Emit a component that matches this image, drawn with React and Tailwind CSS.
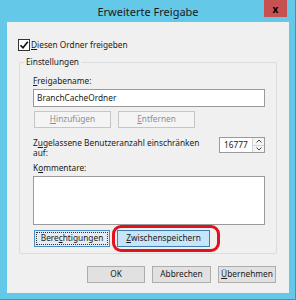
import { useState } from "react";

const FONT = { fontFamily: '"Noto Sans", "Liberation Sans", sans-serif' };

function Btn({ children, disabled, className = "" }) {
  return (
    <button
      disabled={disabled}
      className={`h-[17px] border text-[8.3px] leading-none ${
        disabled
          ? "bg-[#f4f4f4] border-[#c6c6c6] text-[#8f8f8f]"
          : "bg-[#e1e1e1] border-[#adadad] text-[#1a1a1a]"
      } ${className}`}
    >
      {children}
    </button>
  );
}

export default function App() {
  const [shared, setShared] = useState(true);

  return (
    <div
      className="w-[296px] h-[300px] bg-[#64c8e9] flex flex-col border-r border-b border-[#3f93b4] text-[8.3px] text-[#1a1a1a]"
      style={FONT}
    >
      {/* Title bar */}
      <div className="h-[22px] flex items-start shrink-0">
        <div className="flex-1 pt-[5px] pl-[32px] text-center text-[11px] leading-[14px] text-[#1a1a1a]">
          Erweiterte Freigabe
        </div>
        <div className="w-[23px] h-[17px] mr-[8px] bg-[#c75050] flex items-center justify-center text-[10px] font-bold text-black leading-none">
          x
        </div>
      </div>

      {/* Body */}
      <div className="flex-1 ml-[7px] mr-[6px] mb-[6px] bg-[#f0f0f0] flex flex-col">
        <label className="mt-[17px] ml-[11px] flex items-center gap-[1px] h-[12px]">
          <span
            onClick={() => setShared(!shared)}
            className="w-[12px] h-[12px] border border-[#333] bg-white flex items-center justify-center"
          >
            {shared && (
              <svg width="10" height="10" viewBox="0 0 10 10">
                <path d="M1.5 5.2 L4 7.8 L8.8 1.8" fill="none" stroke="#111" strokeWidth="1.6" />
              </svg>
            )}
          </span>
          <span className="leading-none">
            <u>D</u>iesen Ordner freigeben
          </span>
        </label>

        {/* Group box */}
        <div className="relative mt-[11px] mx-[12px] h-[192px] border border-[#dcdcdc] rounded-[2px] pl-[13px] pr-[11px] flex flex-col">
          <span className="absolute -top-[7px] left-[4px] px-[2px] bg-[#f0f0f0] leading-[12px]">
            Einstellungen
          </span>

          <div className="mt-[12px] leading-[12px]">
            <u>F</u>reigabename:
          </div>
          <div className="mt-[2px] h-[18px] border border-[#9a9a9a] bg-white flex items-center pl-[3px] leading-none">
            BranchCacheOrdner
          </div>
          <div className="mt-[4px] flex gap-[7px] pl-[1px]">
            <Btn disabled className="w-[77px]">
              <u>H</u>inzufügen
            </Btn>
            <Btn disabled className="w-[77px]">
              <u>E</u>ntfernen
            </Btn>
          </div>

          <div className="mt-[9px] flex items-start justify-between">
            <div className="leading-[10px] pt-[1px]">
              Z<u>u</u>gelassene Benutzeranzahl einschränken
              <br />
              auf:
            </div>
            <div className="w-[46px] h-[16px] border border-[#9a9a9a] bg-white flex">
              <div className="flex-1 pl-[4px] flex items-center leading-none">16777</div>
              <div className="w-[12px] flex flex-col border-l border-[#d4d4d4] bg-[#f5f5f5]">
                <div className="flex-1 flex items-center justify-center border-b border-[#d4d4d4]">
                  <svg width="6" height="4" viewBox="0 0 6 4">
                    <path d="M0.5 3.5 L3 1 L5.5 3.5" fill="none" stroke="#444" strokeWidth="1" />
                  </svg>
                </div>
                <div className="flex-1 flex items-center justify-center">
                  <svg width="6" height="4" viewBox="0 0 6 4">
                    <path d="M0.5 0.5 L3 3 L5.5 0.5" fill="none" stroke="#444" strokeWidth="1" />
                  </svg>
                </div>
              </div>
            </div>
          </div>

          <div className="mt-[4px] leading-[12px]">
            K<u>o</u>mmentare:
          </div>
          <div className="mt-[2px] h-[49px] border border-[#9a9a9a] bg-white" />

          <div className="mt-[5px] flex gap-[7px] pl-[1px]">
            <button className="w-[76px] h-[17px] border border-[#4a8cc4] bg-[#e4ebf2] text-[8.3px] leading-none p-[1px]">
              <span className="flex h-full items-center justify-center border border-dotted border-[#333]">
                Bere<u>c</u>htigungen
              </span>
            </button>
            <div className="relative">
              <button className="w-[93px] h-[17px] border border-[#3c7fb1] bg-[#c7e5fa] text-[8.3px] leading-none">
                <u>Z</u>wischenspeichern
              </button>
              <span className="absolute -left-[5px] -right-[10px] -top-[5px] -bottom-[5px] border-[3px] border-[#e3101e] rounded-[9px] pointer-events-none" />
            </div>
          </div>
        </div>

        <div className="mt-[12px] flex justify-end gap-[7px] pr-[13px]">
          <Btn className="w-[58px]">OK</Btn>
          <Btn className="w-[59px]">Abbrechen</Btn>
          <Btn className="w-[58px]">
            <u>Ü</u>bernehmen
          </Btn>
        </div>
      </div>
    </div>
  );
}
